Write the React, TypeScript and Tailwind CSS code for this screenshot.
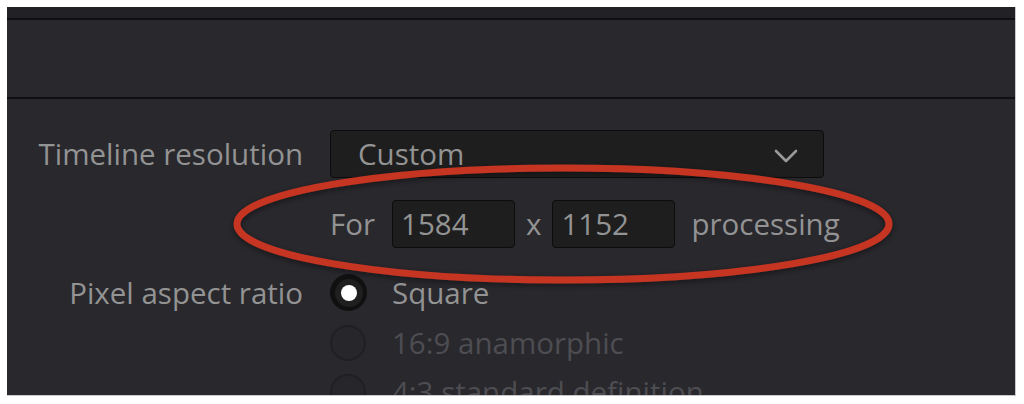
function Radio({ checked = false }: { checked?: boolean }) {
  if (checked) {
    return (
      <div className="w-[37px] h-[37px] rounded-full bg-[#101010] flex items-center justify-center">
        <div className="w-[28px] h-[28px] rounded-full bg-[#1f1f1f] flex items-center justify-center">
          <div className="w-[16px] h-[16px] rounded-full bg-white" />
        </div>
      </div>
    )
  }
  return <div className="w-[36px] h-[36px] rounded-full border-2 border-[#202024] bg-[#26262b]" />
}

function App() {
  return (
    <div className="w-[1024px] h-[404px] bg-white pt-[7px] pl-[7px] overflow-hidden" style={{ fontFamily: '"Open Sans", "Noto Sans", sans-serif' }}>
      <div className="relative w-[1009px] h-[389px] bg-[#28282d] border-r border-b border-[#c9c9c9] overflow-hidden">
        <div className="h-[13px] bg-[#222226] border-b-2 border-[#0f0f10]" />
        <div className="h-[79px] border-b-2 border-[#101011]" />

        <div className="grid grid-cols-[296px_auto] gap-x-[27px] pt-[31px] text-[29.5px] leading-none text-[#939393]">
          <div className="h-[48px] flex items-center justify-end">Timeline resolution</div>
          <div className="w-[494px] h-[48px] rounded-[4px] bg-[#1e1e1f] border border-[#0c0c0c] flex items-center justify-between pl-[27px] pr-[25px]">
            <span>Custom</span>
            <svg width="24" height="14" viewBox="0 0 24 14" className="mt-[3px]">
              <polyline points="2,2 12,12 22,2" fill="none" stroke="#9a9a9a" strokeWidth="2.6" strokeLinecap="round" strokeLinejoin="round" />
            </svg>
          </div>

          <div className="mt-[22px]" />
          <div className="mt-[22px] flex items-center h-[48px]">
            <span>For</span>
            <div className="ml-[17px] w-[123px] h-[48px] rounded-[4px] bg-[#1e1e1f] border border-[#0c0c0c] flex items-center pl-[8px]">1584</div>
            <span className="mx-[11px]">x</span>
            <div className="w-[123px] h-[48px] rounded-[4px] bg-[#1e1e1f] border border-[#0c0c0c] flex items-center pl-[8px]">1152</div>
            <span className="ml-[16px]">processing</span>
          </div>

          <div className="mt-[26px] h-[37px] flex items-center justify-end">Pixel aspect ratio</div>
          <div className="mt-[26px] flex items-center gap-[25px]">
            <Radio checked />
            <span>Square</span>
          </div>

          <div className="mt-[14px]" />
          <div className="mt-[14px] flex items-center gap-[26px] text-[#4d4d52]">
            <Radio />
            <span>16:9 anamorphic</span>
          </div>

          <div className="mt-[13px]" />
          <div className="mt-[13px] flex items-center gap-[26px] text-[#4d4d52]">
            <Radio />
            <span>4:3 standard definition</span>
          </div>
        </div>

        <svg className="absolute left-0 top-0 pointer-events-none" width="1009" height="389">
          <defs>
            <filter id="sh" x="-10%" y="-30%" width="120%" height="160%">
              <feDropShadow dx="0" dy="2" stdDeviation="3" floodColor="#000" floodOpacity="0.45" />
            </filter>
          </defs>
          <ellipse cx="556" cy="217" rx="326" ry="56" fill="none" stroke="#c63523" strokeWidth="7" filter="url(#sh)" />
        </svg>
      </div>
    </div>
  )
}

export default App
